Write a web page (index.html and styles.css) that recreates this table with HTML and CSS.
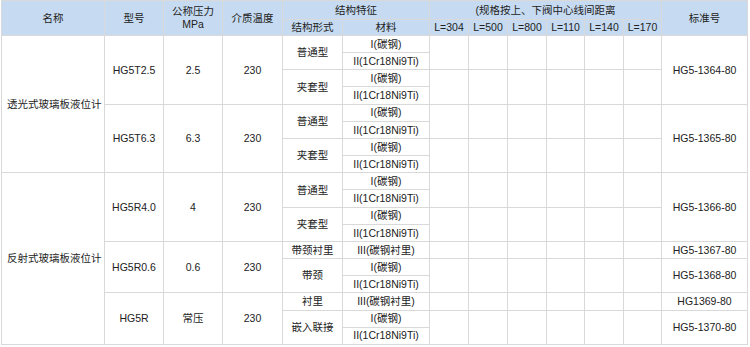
FILE: index.html
```html
<!DOCTYPE html>
<html lang="zh">
<head>
<meta charset="utf-8">
<link rel="stylesheet" href="styles.css">
</head>
<body>
<table class="spec">
<colgroup>
<col class="c-name"><col class="c-model"><col class="c-press"><col class="c-temp"><col class="c-form"><col class="c-mat">
<col class="c-l"><col class="c-l"><col class="c-l"><col class="c-l2"><col class="c-l"><col class="c-l2"><col class="c-std">
</colgroup>
<thead>
<tr class="h1">
<th rowspan="2">名称</th><th rowspan="2">型号</th><th rowspan="2">公称压力<br>MPa</th><th rowspan="2">介质温度</th>
<th colspan="2">结构特征</th><th colspan="6">(规格按上、下阀中心线间距离</th><th rowspan="2">标准号</th>
</tr>
<tr class="h2">
<th>结构形式</th><th>材料</th><th>L=304</th><th>L=500</th><th>L=800</th><th>L=110</th><th>L=140</th><th>L=170</th>
</tr>
</thead>
<tbody>
<tr><td rowspan="8" class="left">透光式玻璃板液位计</td><td rowspan="4">HG5T2.5</td><td rowspan="4">2.5</td><td rowspan="4">230</td><td rowspan="2">普通型</td><td>I(碳钢)</td><td rowspan="2"></td><td rowspan="2"></td><td rowspan="2"></td><td rowspan="2"></td><td rowspan="2"></td><td rowspan="2"></td><td rowspan="4">HG5-1364-80</td></tr>
<tr><td>II(1Cr18Ni9Ti)</td></tr>
<tr><td rowspan="2">夹套型</td><td>I(碳钢)</td><td rowspan="2"></td><td rowspan="2"></td><td rowspan="2"></td><td rowspan="2"></td><td rowspan="2"></td><td rowspan="2"></td></tr>
<tr><td>II(1Cr18Ni9Ti)</td></tr>
<tr><td rowspan="4">HG5T6.3</td><td rowspan="4">6.3</td><td rowspan="4">230</td><td rowspan="2">普通型</td><td>I(碳钢)</td><td rowspan="2"></td><td rowspan="2"></td><td rowspan="2"></td><td rowspan="2"></td><td rowspan="2"></td><td rowspan="2"></td><td rowspan="4">HG5-1365-80</td></tr>
<tr><td>II(1Cr18Ni9Ti)</td></tr>
<tr><td rowspan="2">夹套型</td><td>I(碳钢)</td><td rowspan="2"></td><td rowspan="2"></td><td rowspan="2"></td><td rowspan="2"></td><td rowspan="2"></td><td rowspan="2"></td></tr>
<tr><td>II(1Cr18Ni9Ti)</td></tr>
<tr><td rowspan="10" class="left">反射式玻璃板液位计</td><td rowspan="4">HG5R4.0</td><td rowspan="4">4</td><td rowspan="4">230</td><td rowspan="2">普通型</td><td>I(碳钢)</td><td rowspan="2"></td><td rowspan="2"></td><td rowspan="2"></td><td rowspan="2"></td><td rowspan="2"></td><td rowspan="2"></td><td rowspan="4">HG5-1366-80</td></tr>
<tr><td>II(1Cr18Ni9Ti)</td></tr>
<tr><td rowspan="2">夹套型</td><td>I(碳钢)</td><td rowspan="2"></td><td rowspan="2"></td><td rowspan="2"></td><td rowspan="2"></td><td rowspan="2"></td><td rowspan="2"></td></tr>
<tr><td>II(1Cr18Ni9Ti)</td></tr>
<tr><td rowspan="3">HG5R0.6</td><td rowspan="3">0.6</td><td rowspan="3">230</td><td>带颈衬里</td><td>III(碳钢衬里)</td><td></td><td></td><td></td><td></td><td></td><td></td><td>HG5-1367-80</td></tr>
<tr><td rowspan="2">带颈</td><td>I(碳钢)</td><td rowspan="2"></td><td rowspan="2"></td><td rowspan="2"></td><td rowspan="2"></td><td rowspan="2"></td><td rowspan="2"></td><td rowspan="2">HG5-1368-80</td></tr>
<tr><td>II(1Cr18Ni9Ti)</td></tr>
<tr><td rowspan="3">HG5R</td><td rowspan="3">常压</td><td rowspan="3">230</td><td>衬里</td><td>III(碳钢衬里)</td><td></td><td></td><td></td><td></td><td></td><td></td><td>HG1369-80</td></tr>
<tr><td rowspan="2">嵌入联接</td><td>I(碳钢)</td><td rowspan="2"></td><td rowspan="2"></td><td rowspan="2"></td><td rowspan="2"></td><td rowspan="2"></td><td rowspan="2"></td><td rowspan="2">HG5-1370-80</td></tr>
<tr><td>II(1Cr18Ni9Ti)</td></tr>
</tbody>
</table>
</body>
</html>
```
FILE: styles.css
```css
html, body {
  margin: 0;
  padding: 0;
  background: #ffffff;
}
.spec {
  margin: 0 0 0 1px;
  width: 746px;
  table-layout: fixed;
  border-collapse: collapse;
  font-family: "Liberation Sans", "Noto Sans CJK SC", sans-serif;
  font-size: 10.5px;
  line-height: 1.2;
  color: #222222;
}
.c-name { width: 103px; }
.c-model { width: 59px; }
.c-press { width: 59px; }
.c-temp { width: 60px; }
.c-form { width: 60px; }
.c-mat { width: 87px; }
.c-l { width: 39px; }
.c-l2 { width: 38px; }
.c-std { width: 86px; }
.spec th,
.spec td {
  border: 1px solid #d9d9d9;
  padding: 0;
  text-align: center;
  vertical-align: middle;
  white-space: nowrap;
  overflow: hidden;
}
.spec th {
  background: #c6dbf1;
  font-weight: normal;
}
.h1 { height: 19px; }
.h2 { height: 16px; }
.spec tbody tr { height: 17.17px; }
.spec td.left {
  text-align: left;
  padding-left: 5px;
}
```
